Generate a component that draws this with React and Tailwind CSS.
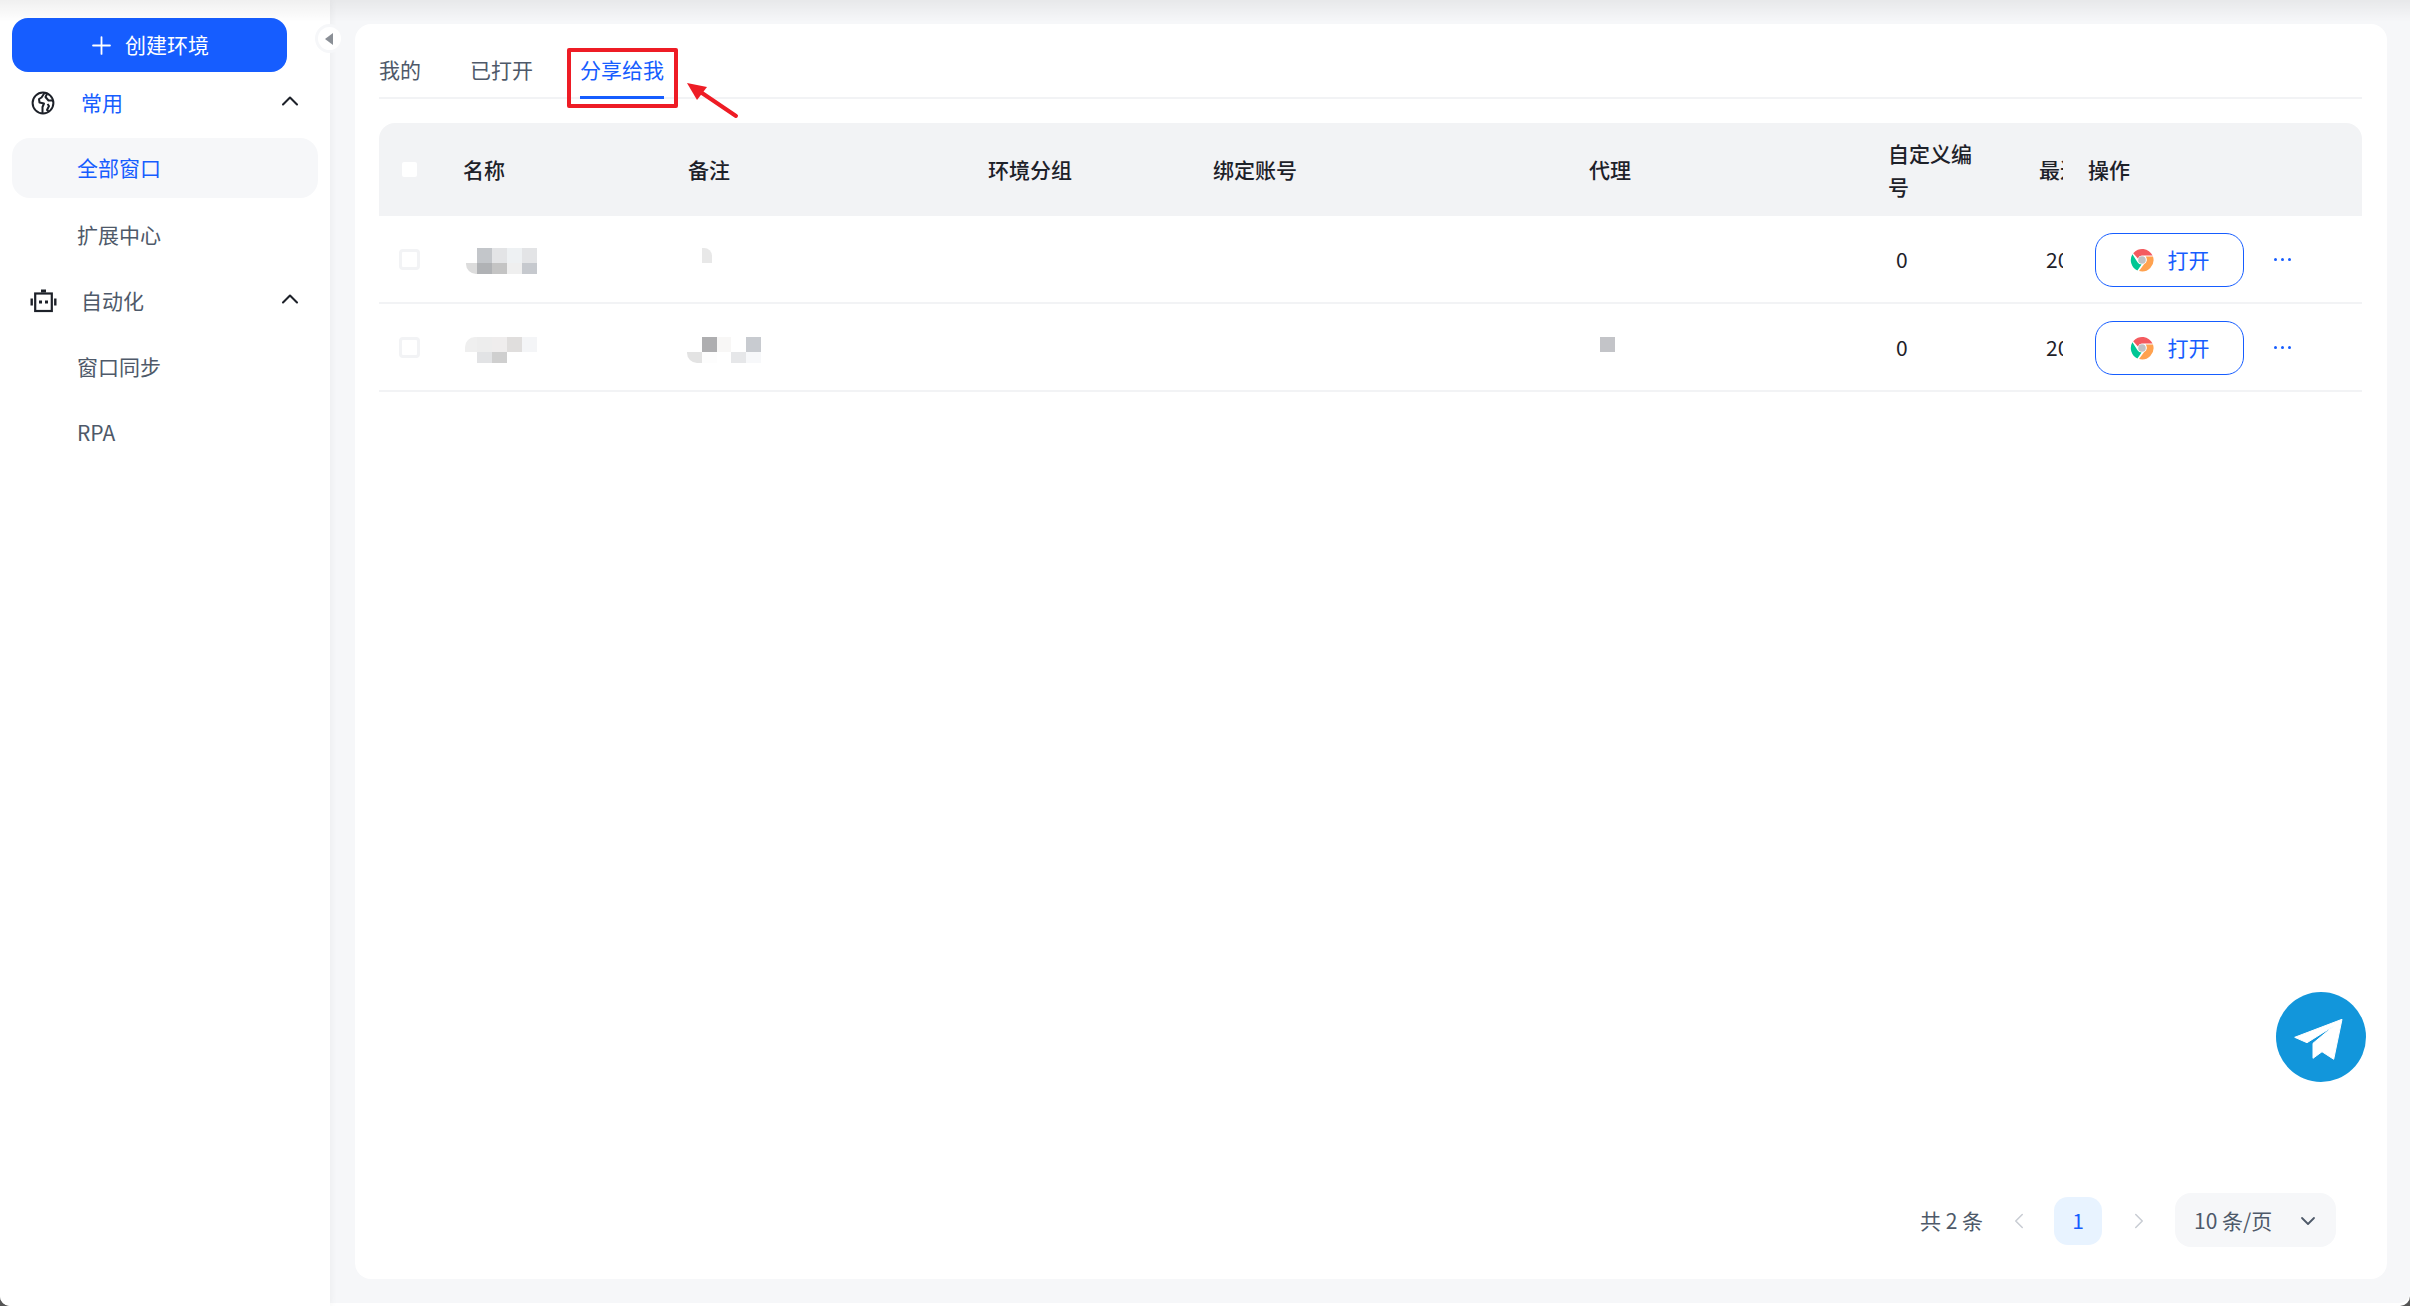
import React from 'react'
import { ChevronUp, ChevronDown, ChevronLeft, ChevronRight, Plus } from 'lucide-react'

const FONT = "font-['Noto_Sans_CJK_SC','Noto_Sans',sans-serif]"
const COLS = 'grid grid-cols-[84px_225px_300px_225px_376px_299px_151px_49px_1fr]'

const GlobeIcon = () => (
  <svg width="24" height="24" viewBox="0 0 24 24" fill="none" stroke="#1d2129" strokeWidth="2" strokeLinejoin="round">
    <circle cx="12" cy="12" r="10.4" />
    <path d="M13.5 2 L10.5 6.5 L8 8 L8.5 11.5 L13 12.5 L11.5 16 L11.5 22" />
    <path d="M22 9.5 L17.5 9.5 L14.5 6 L16 3" />
    <path d="M16.5 13 L18 15 L16 19 L17.5 20" />
  </svg>
)

const BotIcon = () => (
  <svg width="27" height="24" viewBox="0 0 27 24" fill="none">
    <rect x="5.2" y="4.5" width="16.6" height="17.5" stroke="#1d2129" strokeWidth="2.2" />
    <rect x="11" y="0.5" width="5" height="3" fill="#1d2129" />
    <rect x="9" y="11.5" width="3" height="3" fill="#1d2129" />
    <rect x="15" y="11.5" width="3" height="3" fill="#1d2129" />
    <rect x="0.5" y="9.5" width="2.4" height="7" fill="#1d2129" />
    <rect x="24.1" y="9.5" width="2.4" height="7" fill="#1d2129" />
  </svg>
)

const ChromeIcon = () => (
  <svg width="24" height="24" viewBox="0 0 24 24">
    <path d="M3.2 5.2 A11.5 11.5 0 0 1 22.6 7.6 L12.4 7.6 A4.6 4.6 0 0 0 7.8 10.4 Z" fill="#f45b5f" />
    <path d="M2.4 6.2 L7.5 14.2 A4.7 4.7 0 0 0 11.6 16.6 L7.4 22.4 A11.5 11.5 0 0 1 2.4 6.2 Z" fill="#00c795" />
    <path d="M23 8.6 A11.5 11.5 0 0 1 9 23.1 L14.2 16 A4.7 4.7 0 0 0 15.6 8.6 Z" fill="#ffa24f" />
    <circle cx="12" cy="12" r="3.8" fill="#bfc0c2" />
  </svg>
)

const PlaneIcon = () => (
  <svg width="90" height="90" viewBox="0 0 90 90">
    <path d="M18.7 45.3 L66 27.3 L57.7 67.3 L46 59.7 L37 66.3 L37 51.3 L57.7 34 L31 50.7 Z" fill="#fff" stroke="#fff" strokeWidth="1" strokeLinejoin="round" />
  </svg>
)

// mosaics covering blurred-out names in the table
const Pixels = ({ rows, widths, heights, className = '' }) => (
  <div className={`flex flex-col w-fit overflow-hidden ${className}`}>
    {rows.map((row, r) => (
      <div key={r} className="flex">
        {row.map((c, i) => (
          <div key={i} style={{ width: widths[i], height: heights[r], background: c || 'transparent' }} />
        ))}
      </div>
    ))}
  </div>
)

const SubItem = ({ label, active }) => (
  <div className={`h-[60px] rounded-[18px] pl-[65px] flex items-center text-[21px] ${active ? 'bg-[#f6f7f9] text-[#165dff]' : 'text-[#4e5969]'}`}>
    {label}
  </div>
)

const Group = ({ icon, label, active, textClass }) => (
  <div className="h-[66px] pb-[4px] flex items-center">
    <div className="w-[62px] flex justify-center">{icon}</div>
    <span className={`text-[21px] ${textClass} ${active ? 'text-[#165dff]' : 'text-[#4e5969]'}`}>{label}</span>
    <ChevronUp size={28} strokeWidth={1.8} className="ml-auto mr-[14px] mb-[5px] text-[#1d2129]" />
  </div>
)

const Sidebar = () => (
  <aside className="w-[330px] shrink-0 bg-white shadow-[0_0_8px_rgba(0,0,0,0.06)] relative z-10">
    <div className="pt-[18px] pl-[12px] pr-[12px]">
      <button className="w-[275px] h-[54px] pr-[3px] rounded-[16px] bg-[#165dff] text-white text-[21px] flex items-center justify-center gap-[9px]">
        <Plus size={29} strokeWidth={1.5} />
        创建环境
      </button>
      <Group icon={<GlobeIcon />} label="常用" active textClass="ml-[7px]" />
      <SubItem label="全部窗口" active />
      <div className="mt-[7px]">
        <SubItem label="扩展中心" />
      </div>
      <div className="mt-[5px]">
        <Group icon={<BotIcon />} label="自动化" textClass="ml-[7px]" />
      </div>
      <div className="mt-[1px]">
        <SubItem label="窗口同步" />
      </div>
      <div className="mt-[6px]">
        <SubItem label="RPA" />
      </div>
    </div>
    <div className="absolute left-[315px] top-[24px] w-[29px] h-[29px] rounded-full bg-white border-[3px] border-[#f6f7f9] flex items-center justify-center">
      <span className="w-0 h-0 border-y-[6px] border-y-transparent border-r-[8px] border-r-[#8a8f96] mr-[2px]" />
    </div>
  </aside>
)

const Tabs = () => (
  <div className="h-[75px] border-b-2 border-[#f2f3f5] flex text-[21px] text-[#4e5969]">
    <div className="w-[91px] pt-[30px]">我的</div>
    <div className="w-[110px] pt-[30px]">已打开</div>
    <div className="relative h-[75px] pt-[30px] text-[#165dff]">
      分享给我
      <div className="absolute left-0 right-0 bottom-0 h-[3px] bg-[#165dff]" />
      {/* annotation added on top of the screenshot */}
      <div className="absolute left-[-13px] top-[24px] w-[111px] h-[60px] border-[4px] border-[#ee1c25] rounded-[2px]" />
      <svg className="absolute left-[106px] top-[55px]" width="60" height="50" viewBox="0 0 60 50">
        <path d="M50 37 L16 14" stroke="#ee1c25" strokeWidth="4" strokeLinecap="round" />
        <path d="M1 4 L21 8 L11 21 Z" fill="#ee1c25" />
      </svg>
    </div>
  </div>
)

const HeaderRow = () => (
  <div className={`${COLS} h-[93px] bg-[#f2f3f5] rounded-t-[16px] items-center text-[21px] font-medium leading-[33px] text-[#1d2129]`}>
    <div className="pl-[23px]">
      <div className="w-[15px] h-[15px] bg-white rounded-[2px]" />
    </div>
    <div>名称</div>
    <div>备注</div>
    <div>环境分组</div>
    <div>绑定账号</div>
    <div>代理</div>
    <div className="pr-[50px]">自定义编号</div>
    <div className="overflow-hidden whitespace-nowrap w-[24px]">最近打开</div>
    <div className="whitespace-nowrap">操作</div>
  </div>
)

const Row = ({ name, note, proxy }) => (
  <div className={`${COLS} h-[88px] pt-[2px] border-b-2 border-[#f2f3f5] items-center text-[21px] text-[#1d2129]`}>
    <div className="pl-[20px] -mt-[2px]">
      <div className="w-[21px] h-[21px] rounded-[4px] border-[3px] border-[#f2f3f5] bg-white" />
    </div>
    <div className="pl-[2px]">{name}</div>
    <div>{note}</div>
    <div />
    <div />
    <div className="pl-[11px]">{proxy}</div>
    <div className="pl-[8px]">0</div>
    <div className="pl-[7px]">
      <div className="w-[17px] overflow-hidden">2026</div>
    </div>
    <div className="pl-[7px] flex items-center">
      <button className="w-[149px] h-[54px] rounded-[18px] border-[1.5px] border-[#165dff] bg-white text-[#165dff] text-[21px] flex items-center justify-center gap-[14px]">
        <ChromeIcon />
        打开
      </button>
      <span className="ml-[30px] mb-[2px] flex gap-[4px]">
        <i className="w-[3px] h-[3px] bg-[#165dff] rounded-full" />
        <i className="w-[3px] h-[3px] bg-[#165dff] rounded-full" />
        <i className="w-[3px] h-[3px] bg-[#165dff] rounded-full" />
      </span>
    </div>
  </div>
)

const Pagination = () => (
  <div className="flex items-center text-[21px] text-[#4e5969]">
    <span className="mr-[23px] mt-[2px]">共 2 条</span>
    <ChevronLeft size={26} strokeWidth={1.4} className="mt-[2px] text-[#c9cdd4]" />
    <div className="w-[48px] h-[48px] ml-[22px] mr-[24px] mt-[2px] rounded-[14px] bg-[#e8f3ff] text-[#165dff] flex items-center justify-center">1</div>
    <ChevronRight size={26} strokeWidth={1.4} className="mt-[2px] text-[#c9cdd4]" />
    <div className="ml-[23px] w-[161px] h-[54px] pt-[2px] rounded-[16px] bg-[#f6f7f9] pl-[19px] pr-[16px] flex items-center justify-between">
      10 条/页
      <ChevronDown size={24} strokeWidth={1.8} />
    </div>
  </div>
)

export default function App() {
  return (
    <div className={`${FONT} relative w-[2410px] h-[1306px] overflow-hidden bg-[#555]`}>
      <div className="w-full h-full flex bg-white rounded-b-[10px] overflow-hidden">
        <Sidebar />
        <main className="flex-1 h-[1303px] pt-[24px] pl-[25px] pr-[23px] pb-[24px] bg-[#f6f7f9] rounded-br-[10px]">
          <div className="relative h-full bg-white rounded-[16px] pl-[24px] pr-[25px] flex flex-col">
            <Tabs />
            <div className="mt-[24px]">
              <HeaderRow />
              <Row
                name={
                  <Pixels
                    widths={[11, 15, 15, 15, 15]}
                    heights={[15, 11]}
                    rows={[
                      [null, '#c3c6ca', '#e3e4e6', '#eef1f3', '#e3e4e6'],
                      ['#dcdcdc', '#b0b2b5', '#c4c4c4', '#efefef', '#c6c9ce'],
                    ]}
                    className="ml-[1px] mt-[2px] rounded-bl-[10px]"
                  />
                }
                note={
                  <Pixels widths={[10]} heights={[15]} rows={[['#e8e8e8']]} className="ml-[14px] -mt-[9px] rounded-tr-[8px]" />
                }
              />
              <Row
                name={
                  <Pixels
                    widths={[12, 15, 15, 15, 15]}
                    heights={[15, 11]}
                    rows={[
                      ['#efefef', '#ededed', '#efeded', '#e0dedd', '#f4f5f7'],
                      [null, '#e2e3e5', '#cfcfcf', null, null],
                    ]}
                    className="mt-[4px] rounded-tl-[10px]"
                  />
                }
                note={
                  <Pixels
                    widths={[15, 15, 14, 15, 15]}
                    heights={[15, 11]}
                    rows={[
                      [null, '#aeaeb0', '#f8f7f6', null, '#c8cbd0'],
                      ['#e3e3e3', '#fdfdfd', null, '#e6e7e9', '#f7f8fa'],
                    ]}
                    className="-ml-[1px] mt-[4px] rounded-bl-[10px]"
                  />
                }
                proxy={<Pixels widths={[15]} heights={[15]} rows={[['#c3c4c8']]} className="-mt-[7px]" />}
              />
            </div>
            <div className="mt-auto mb-[32px] flex justify-end pr-[26px]">
              <Pagination />
            </div>
            <button className="absolute left-[1921px] top-[968px] w-[90px] h-[90px] rounded-full bg-[#1296db]">
              <PlaneIcon />
            </button>
          </div>
        </main>
      </div>
      <div className="absolute left-0 right-0 top-0 h-[22px] z-20 pointer-events-none bg-gradient-to-b from-black/[0.06] to-transparent" />
    </div>
  )
}
